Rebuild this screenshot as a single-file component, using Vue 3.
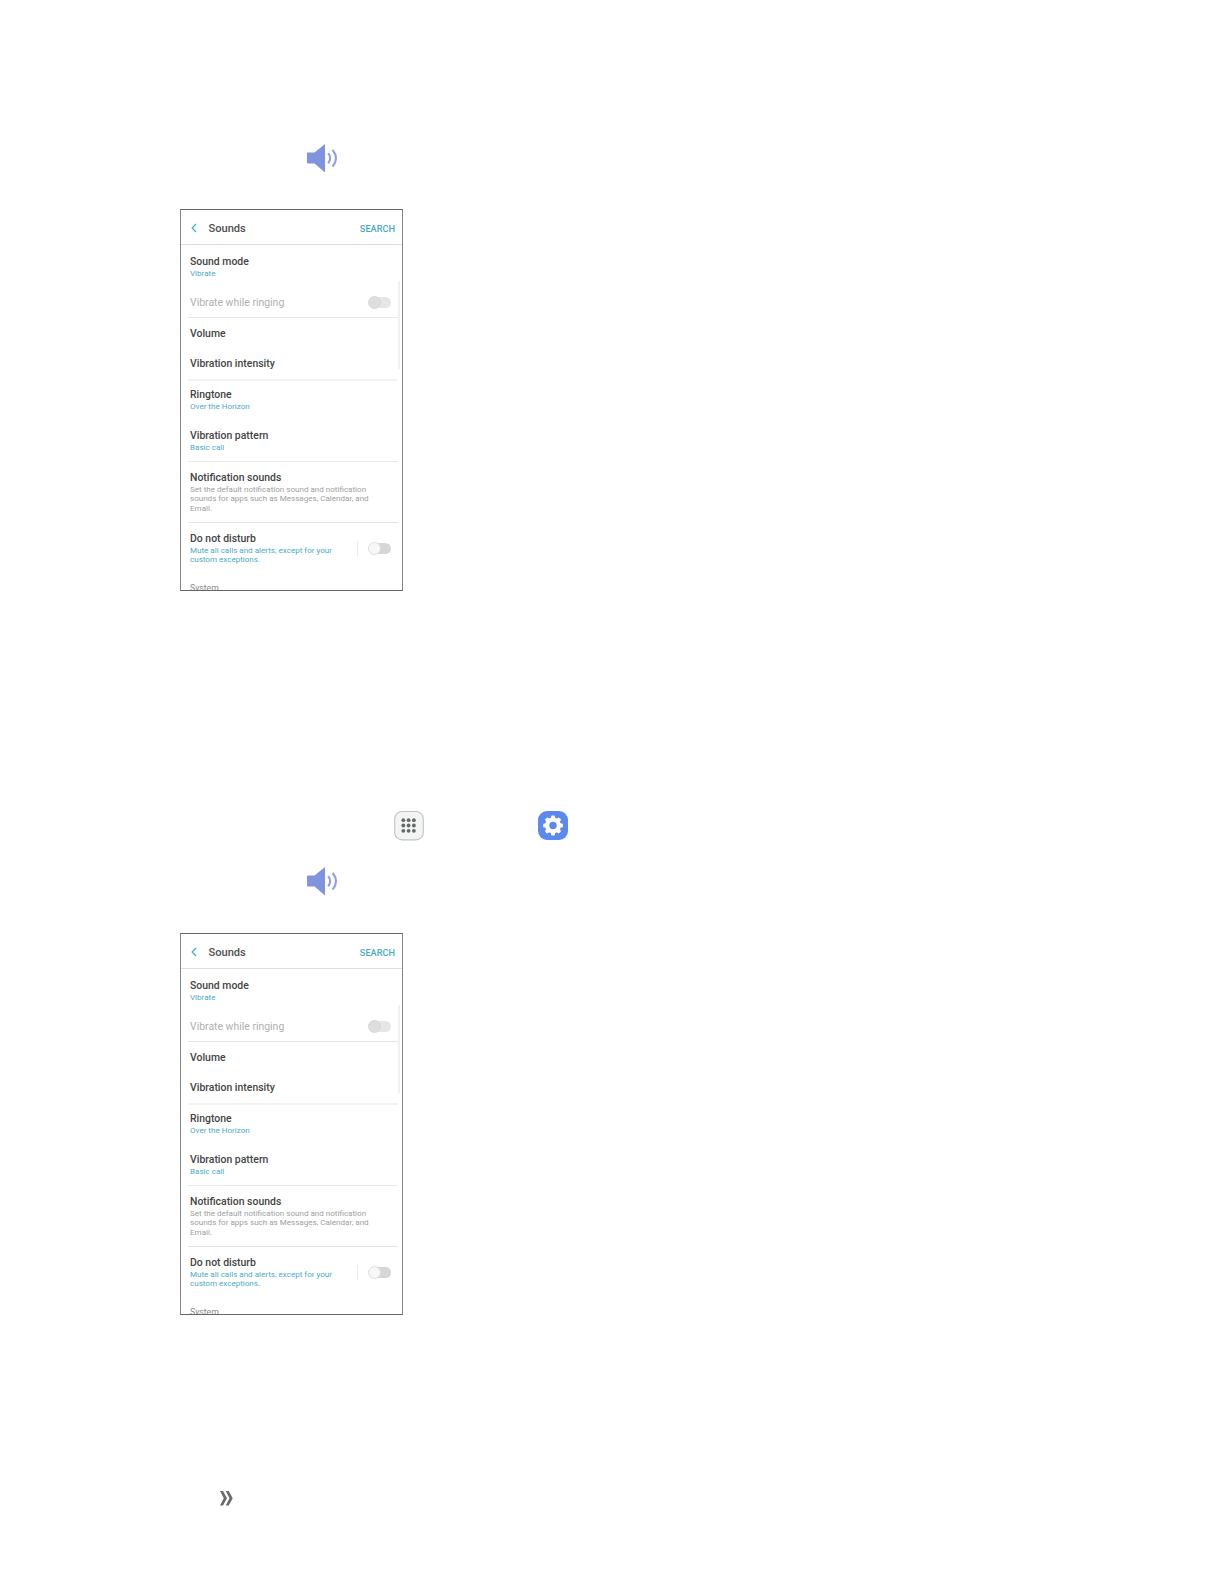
<template>
  <div class="page">
    <template v-for="n in 2" :key="n">
      <div v-if="n === 2" class="line apps-line">
        <svg class="apps" viewBox="0 0 30 30">
          <rect x="0.7" y="0.5" width="28.6" height="28.4" rx="7.5" fill="#f3f5f4" stroke="#c2c4c3" stroke-width="1.1" />
          <g fill="#626a66">
            <circle v-for="d in 9" :key="d" :cx="9.3 + ((d - 1) % 3) * 5.3" :cy="9.2 + Math.floor((d - 1) / 3) * 5.3" r="1.9" />
          </g>
        </svg>
        <svg class="gear" viewBox="0 0 30 30">
          <rect width="30" height="29" rx="9" fill="#5b89ee" />
          <g fill="#fff">
            <circle cx="15" cy="14.5" r="7.9" />
            <rect v-for="a in 8" :key="a" x="13" y="4.6" width="4" height="5" rx="1.2" :transform="`rotate(${a * 45} 15 14.5)`" />
          </g>
          <circle cx="15" cy="14.5" r="3.7" fill="#5b89ee" />
        </svg>
      </div>

      <div class="line speaker-line">
        <svg class="speaker" viewBox="0 0 31 29">
          <path d="M0 9.5Q0 8.5 1 8.5H7.5L18 0V28.5L7.5 19.5H1Q0 19.5 0 18.5Z" fill="#7f93df" />
          <path d="M21.2 9.2Q25.2 14.2 21.2 19.4M25.6 6Q32.4 14.2 25.6 22.6" fill="none" stroke="#8fa1e4" stroke-width="2.1" />
        </svg>
      </div>

      <div class="phone">
        <header class="bar">
          <svg class="back" viewBox="0 0 6 10"><path d="M5 1L1.2 5L5 9" fill="none" stroke="#48b3bd" stroke-width="1.3" /></svg>
          <span class="heading">Sounds</span>
          <span class="search">SEARCH</span>
        </header>
        <div v-for="row in rows" :key="row.title" class="row" :class="row.name">
          <div class="text">
            <div class="title">{{ row.title }}</div>
            <div v-for="s in row.sub" :key="s" class="sub">{{ s }}</div>
          </div>
          <div v-if="row.toggle" class="toggle"><i></i></div>
        </div>
        <div class="scroll"></div>
      </div>
    </template>

    <svg class="chevrons" viewBox="0 0 13 15">
      <path d="M0 0H3L7 7.3L3 14.6H0L3.8 7.3ZM5.7 0H8.7L12.7 7.3L8.7 14.6H5.7L9.5 7.3Z" fill="#6a6a6a" />
    </svg>
  </div>
</template>

<script setup>
const rows = [
  { name: 'mode', title: 'Sound mode', sub: ['Vibrate'] },
  { name: 'ringing', title: 'Vibrate while ringing', toggle: true },
  { name: 'volume', title: 'Volume' },
  { name: 'intensity', title: 'Vibration intensity' },
  { name: 'ringtone', title: 'Ringtone', sub: ['Over the Horizon'] },
  { name: 'pattern', title: 'Vibration pattern', sub: ['Basic call'] },
  {
    name: 'notification',
    title: 'Notification sounds',
    sub: ['Set the default notification sound and notification', 'sounds for apps such as Messages, Calendar, and', 'Email.']
  },
  {
    name: 'disturb',
    title: 'Do not disturb',
    sub: ['Mute all calls and alerts, except for your', 'custom exceptions.'],
    toggle: true
  },
  { name: 'system', title: 'System' }
]
</script>

<style>
body {
  background: #fff;
}
</style>

<style scoped>
.page {
  box-sizing: border-box;
  width: 1224px;
  height: 1584px;
  padding: 144px 0 0 180px;
  background: #fff;
  font-family: Roboto, sans-serif;
  overflow: hidden;
}

.line {
  display: flex;
}

.speaker-line {
  padding-left: 127px;
  margin-bottom: 36px;
}

.apps-line + .speaker-line {
  margin-bottom: 37px;
}

.speaker {
  width: 31px;
  height: 29px;
}

.apps-line {
  gap: 114px;
  padding: 220px 0 26px 214px;
}

.apps,
.gear {
  width: 30px;
  height: 30px;
}

.phone {
  position: relative;
  box-sizing: border-box;
  width: 223px;
  height: 382px;
  border: 1px solid #858585;
  border-top-color: #666;
  border-bottom-color: #666;
  overflow: hidden;
}

.bar {
  display: flex;
  align-items: center;
  box-sizing: border-box;
  height: 35px;
  padding: 2px 7px 0 10px;
  border-bottom: 1px solid #dedede;
}

.back {
  width: 6px;
  height: 10px;
  margin-top: -1px;
}

.heading {
  margin-left: 11.5px;
  color: #505050;
  font-size: 11.1px;
  font-weight: 500;
}

.search {
  margin-left: auto;
  color: #4aabc7;
  font-size: 9.2px;
  font-weight: 500;
}

.row {
  display: flex;
  justify-content: space-between;
  box-sizing: border-box;
  height: 40px;
  margin: 0 4px 0 7px;
  padding: 10px 7px 0 2px;
  white-space: nowrap;
}

.title {
  height: 14px;
  margin-bottom: 0.3px;
  color: #444;
  font-size: 10.45px;
  font-weight: 500;
  line-height: 14px;
}

.sub {
  color: #4aabc7;
  font-size: 8.06px;
  line-height: 9.5px;
}

.ringing {
  height: 33px;
  padding-top: 11px;
  border-bottom: 1px solid #e6e6e6;
}

.ringing .title {
  color: #b0b0b0;
  font-weight: 400;
}

.volume {
  height: 30px;
  padding-top: 8.5px;
}

.intensity {
  height: 33px;
  padding-top: 8.5px;
  border-bottom: 2px solid #f3f3f3;
}

.ringtone {
  padding-top: 7px;
}

.pattern {
  height: 41px;
  padding-top: 8px;
  border-bottom: 1px solid #e9e9e9;
}

.notification {
  height: 61px;
  padding-top: 8.5px;
  border-bottom: 1px solid #e4e4e4;
}

.notification .sub {
  color: #a0a0a0;
}

.disturb {
  height: 61px;
  padding-top: 8.5px;
}

.system {
  padding-top: 0;
}

.system .title {
  height: 9px;
  color: #8a8a8a;
  font-size: 8.7px;
  font-weight: 400;
  line-height: 9px;
}

.toggle {
  box-sizing: border-box;
  width: 22px;
  height: 11px;
  margin-top: 0.5px;
  border-radius: 6px;
  background: #e6e6e6;
}

.toggle i {
  display: block;
  box-sizing: border-box;
  width: 13px;
  height: 13px;
  margin: -1px 0 0 -1px;
  border: 1px solid #d8d8d8;
  border-radius: 50%;
  background: #dedede;
}

.disturb .toggle {
  position: relative;
  margin-top: 11px;
  background: #d6d6d6;
}

.disturb .toggle i {
  border-color: #dedede;
  background: #f7f7f7;
}

.disturb .toggle::before {
  content: "";
  position: absolute;
  left: -12px;
  top: -2px;
  width: 1px;
  height: 15px;
  background: #ebebeb;
}

/* scroll position thumb over the right edge of the list */
.scroll {
  position: absolute;
  top: 71px;
  right: 2px;
  width: 2px;
  height: 88px;
  background: #f1f1f1;
}

.chevrons {
  display: block;
  width: 13px;
  height: 15px;
  margin: 176px 0 0 40px;
}
</style>
